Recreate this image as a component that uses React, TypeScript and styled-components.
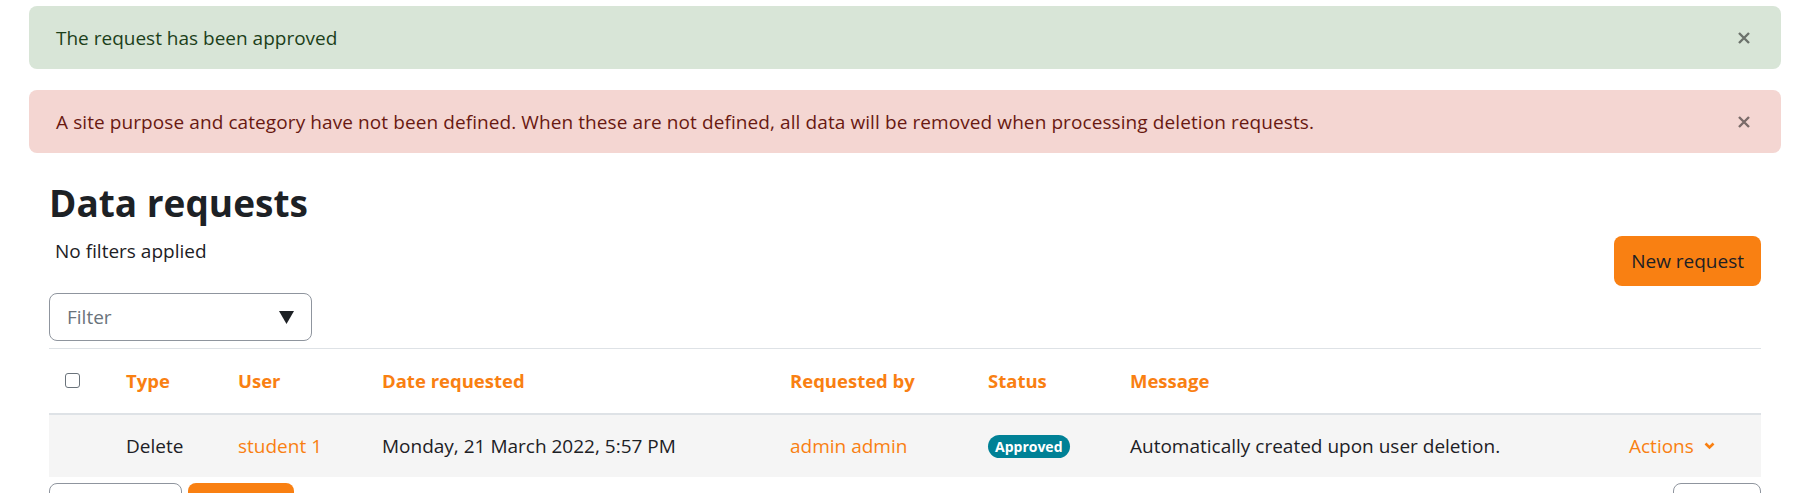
import React from "react";
import styled, { createGlobalStyle } from "styled-components";

const GlobalStyle = createGlobalStyle`
  html, body { margin: 0; padding: 0; background: #ffffff; }
  body {
    font-family: "Open Sans", "Noto Sans", sans-serif;
    color: #1d2125;
    width: 1795px;
    height: 493px;
    overflow: hidden;
  }
  * { box-sizing: border-box; }
`;

const Page = styled.div`
  padding: 6px 14px 0 29px;
`;

const alertColors = {
  success: { bg: "#d8e5d7", fg: "#1c3f1a" },
  danger: { bg: "#f4d6d2", fg: "#691911" },
};

const Alert = styled.div<{ $variant: "success" | "danger" }>`
  display: flex;
  align-items: center;
  justify-content: space-between;
  height: 63px;
  padding: 0 30px 0 27px;
  border-radius: 8px;
  background: ${(p) => alertColors[p.$variant].bg};
  color: ${(p) => alertColors[p.$variant].fg};
  font-size: 19px;
  line-height: 28px;
  & + & {
    margin-top: 21px;
  }
`;

const AlertText = styled.span<{ $spacing?: number }>`
  letter-spacing: ${(p) => p.$spacing ?? 0}px;
`;

const CloseButton = styled.button`
  display: flex;
  align-items: center;
  justify-content: center;
  width: 14px;
  height: 14px;
  padding: 0;
  border: 0;
  background: none;
  color: rgba(0, 0, 0, 0.5);
  cursor: pointer;
`;

const Main = styled.div`
  padding: 0 20px;
`;

const Heading = styled.h2`
  margin: 28px 0 0;
  font-size: 37px;
  line-height: 44px;
  font-weight: 700;
  color: #1d2125;
`;

const Toolbar = styled.div`
  display: flex;
  justify-content: space-between;
  align-items: flex-start;
  margin-top: 11px;
`;

const FilterNote = styled.div`
  margin-top: 1px;
  padding-left: 6px;
  font-size: 19px;
  line-height: 28px;
`;

const PrimaryButton = styled.button`
  display: inline-flex;
  align-items: center;
  justify-content: center;
  height: 50px;
  padding: 0 17px;
  border: 0;
  border-radius: 8px;
  background: #f98012;
  color: #1d2125;
  font-family: inherit;
  font-size: 19px;
  cursor: pointer;
`;

const FilterSelect = styled.div`
  display: flex;
  align-items: center;
  justify-content: space-between;
  width: 263px;
  height: 48px;
  margin-top: 7px;
  padding: 0 17px 0 17px;
  border: 1px solid #8f959e;
  border-radius: 8px;
  color: #6a737b;
  font-size: 19px;
`;

const Table = styled.div`
  margin-top: 7px;
  border-top: 1px solid #dee2e6;
`;

const COLUMNS = "62px 112px 144px 408px 198px 142px 499px 1fr";

const Row = styled.div<{ $head?: boolean }>`
  display: grid;
  grid-template-columns: ${COLUMNS};
  align-items: center;
  height: ${(p) => (p.$head ? "66px" : "62px")};
  background: ${(p) => (p.$head ? "#ffffff" : "#f5f5f5")};
  border-bottom: ${(p) => (p.$head ? "2px solid #dee2e6" : "0")};
`;

const Cell = styled.div<{ $head?: boolean; $first?: boolean }>`
  padding-left: ${(p) => (p.$first ? "16px" : "15px")};
  font-size: ${(p) => (p.$head ? "18.5px" : "19px")};
  font-weight: ${(p) => (p.$head ? 700 : 400)};
  color: ${(p) => (p.$head ? "#f98012" : "#1d2125")};
  line-height: 28px;
  white-space: nowrap;
  display: flex;
  align-items: center;
`;

const Link = styled.a`
  color: #f98012;
  text-decoration: none;
`;

const Checkbox = styled.span`
  display: inline-block;
  width: 15px;
  height: 15px;
  margin-top: -2px;
  border: 1.5px solid #6a737b;
  border-radius: 3px;
  background: #fff;
`;

const Badge = styled.span`
  display: inline-block;
  padding: 0 7px;
  height: 23px;
  line-height: 23px;
  border-radius: 12px;
  background: #008196;
  color: #ffffff;
  font-size: 14px;
  font-weight: 700;
`;

const ActionsToggle = styled.a`
  display: inline-flex;
  align-items: center;
  gap: 10px;
  color: #f98012;
  text-decoration: none;
`;

const Footer = styled.div`
  display: flex;
  align-items: flex-start;
  gap: 6px;
  margin-top: 6px;
`;

const OutlineButton = styled.span<{ $w: number }>`
  display: block;
  width: ${(p) => p.$w}px;
  height: 44px;
  border: 1px solid #8f959e;
  border-radius: 8px;
  background: #fff;
`;

const FilledButton = styled.span<{ $w: number }>`
  display: block;
  width: ${(p) => p.$w}px;
  height: 44px;
  border-radius: 8px;
  background: #f98012;
`;

const Spacer = styled.div`
  flex: 1;
`;

const CloseIcon = () => (
  <svg width="14" height="14" viewBox="0 0 14 14" aria-hidden="true">
    <path d="M2 2 L12 12 M12 2 L2 12" stroke="currentColor" strokeWidth="2.4" strokeLinecap="butt" fill="none" />
  </svg>
);

const Caret = () => (
  <svg width="15" height="13" viewBox="0 0 15 13" aria-hidden="true">
    <polygon points="0,0 15,0 7.5,13" fill="#1d2125" />
  </svg>
);

const Chevron = () => (
  <svg width="11" height="8" viewBox="0 0 11 8" aria-hidden="true">
    <polyline points="1.5,1.5 5.5,5.5 9.5,1.5" fill="none" stroke="#f98012" strokeWidth="2.6" />
  </svg>
);

export default function App() {
  return (
    <>
      <GlobalStyle />
      <Page>
        <Alert $variant="success">
          <AlertText>The request has been approved</AlertText>
          <CloseButton aria-label="Close"><CloseIcon /></CloseButton>
        </Alert>
        <Alert $variant="danger">
          <AlertText $spacing={0.09}>
            A site purpose and category have not been defined. When these are not defined, all data will be removed when processing deletion requests.
          </AlertText>
          <CloseButton aria-label="Close"><CloseIcon /></CloseButton>
        </Alert>
        <Main>
          <Heading>Data requests</Heading>
          <Toolbar>
            <FilterNote>No filters applied</FilterNote>
            <PrimaryButton>New request</PrimaryButton>
          </Toolbar>
          <FilterSelect>
            <span>Filter</span>
            <Caret />
          </FilterSelect>
          <Table>
            <Row $head>
              <Cell $head $first><Checkbox /></Cell>
              <Cell $head>Type</Cell>
              <Cell $head>User</Cell>
              <Cell $head>Date requested</Cell>
              <Cell $head>Requested by</Cell>
              <Cell $head>Status</Cell>
              <Cell $head>Message</Cell>
              <Cell $head></Cell>
            </Row>
            <Row>
              <Cell $first></Cell>
              <Cell>Delete</Cell>
              <Cell><Link href="#">student 1</Link></Cell>
              <Cell>Monday, 21 March 2022, 5:57 PM</Cell>
              <Cell><Link href="#">admin admin</Link></Cell>
              <Cell><Badge>Approved</Badge></Cell>
              <Cell>Automatically created upon user deletion.</Cell>
              <Cell>
                <ActionsToggle href="#">Actions <Chevron /></ActionsToggle>
              </Cell>
            </Row>
          </Table>
          <Footer>
            <OutlineButton $w={133} />
            <FilledButton $w={106} />
            <Spacer />
            <OutlineButton $w={88} />
          </Footer>
        </Main>
      </Page>
    </>
  );
}
